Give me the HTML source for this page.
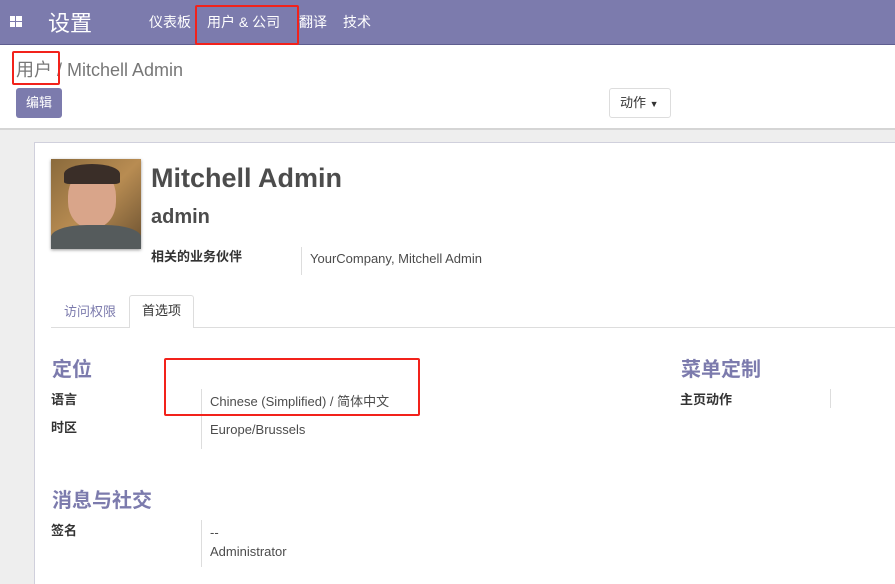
<!DOCTYPE html>
<html><head><meta charset="utf-8"><style>
*{box-sizing:border-box;margin:0;padding:0}
html,body{width:895px;height:584px;overflow:hidden}
body{font-family:"Liberation Sans","Noto Sans CJK SC",sans-serif;font-size:13px;line-height:1.2;color:#4c4c4c;background:#fff;position:relative}
.a{position:absolute;white-space:nowrap}
.nav{left:0;top:0;width:895px;height:45px;background:#7c7bad;border-bottom:1px solid #5e5d8f}
.red{position:absolute;border:2px solid #f2221b;border-radius:2px}
.bg{left:0;top:128px;width:895px;height:456px;background:#eeeeee;border-top:2px solid #d5d5d5}
.sheet{left:34px;top:142px;width:870px;height:450px;background:#fff;border:1px solid #d0d0dc}
.lbl{font-weight:bold;color:#333}
.h{color:#7c7bad;font-weight:bold;font-size:20px}
.vl{position:absolute;width:1px;background:#ddd}
</style></head><body>
<div class="a nav"></div>
<div class="a" style="left:10px;top:16px;width:5px;height:5px;background:#fff"></div>
<div class="a" style="left:16px;top:16px;width:6px;height:5px;background:#fff"></div>
<div class="a" style="left:10px;top:22px;width:5px;height:5px;background:#fff"></div>
<div class="a" style="left:16px;top:22px;width:6px;height:5px;background:#fff"></div>
<div class="a" style="left:48px;top:11px;font-size:22px;color:#fff">设置</div>
<div class="a" style="left:149px;top:14px;font-size:14px;color:#fff">仪表板</div>
<div class="a" style="left:207px;top:14px;font-size:14px;color:#fff">用户 &amp; 公司</div>
<div class="a" style="left:299px;top:14px;font-size:14px;color:#fff">翻译</div>
<div class="a" style="left:343px;top:14px;font-size:14px;color:#fff">技术</div>
<div class="red" style="left:195px;top:5px;width:104px;height:40px"></div>
<div class="a" style="left:16px;top:60px;font-size:18px;color:#777">用户 / Mitchell Admin</div>
<div class="red" style="left:12px;top:51px;width:48px;height:34px"></div>
<div class="a" style="left:16px;top:88px;width:46px;height:30px;background:#7c7bad;border-radius:3px;color:#fff;font-size:13px;line-height:30px;text-align:center">编辑</div>
<div class="a" style="left:609px;top:88px;width:62px;height:30px;border:1px solid #ddd;border-radius:3px;color:#333;line-height:28px;padding-left:10px">动作 <span style="font-size:9px">▼</span></div>
<div class="a bg"></div>
<div class="a sheet"></div>
<div class="a" style="left:51px;top:159px;width:90px;height:90px;overflow:hidden;background:linear-gradient(135deg,#8a6a3c,#b88c52 50%,#6a5030);box-shadow:0 1px 3px rgba(0,0,0,.4)">
<div class="a" style="left:17px;top:11px;width:48px;height:58px;border-radius:45%;background:#d9a58a"></div>
<div class="a" style="left:13px;top:5px;width:56px;height:20px;border-radius:50% 50% 10% 10%;background:#3a2e28"></div>
<div class="a" style="left:0;top:66px;width:90px;height:30px;background:#555b5c;border-radius:40% 40% 0 0"></div>
</div>
<div class="a" style="left:151px;top:162px;font-size:27px;font-weight:bold;color:#4c4c4c">Mitchell Admin</div>
<div class="a" style="left:151px;top:205px;font-size:20px;font-weight:bold;color:#4c4c4c">admin</div>
<div class="a lbl" style="left:151px;top:249px">相关的业务伙伴</div>
<div class="vl" style="left:301px;top:247px;height:28px"></div>
<div class="a" style="left:310px;top:251px;color:#4c4c4c">YourCompany, Mitchell Admin</div>
<div class="a" style="left:51px;top:327px;width:844px;height:1px;background:#ddd"></div>
<div class="a" style="left:64px;top:304px;color:#7c7bad">访问权限</div>
<div class="a" style="left:129px;top:295px;width:65px;height:33px;background:#fff;border:1px solid #ddd;border-bottom:none;border-radius:3px 3px 0 0;text-align:center;line-height:30px;color:#333">首选项</div>
<div class="a h" style="left:52px;top:358px">定位</div>
<div class="a lbl" style="left:51px;top:392px">语言</div>
<div class="a lbl" style="left:51px;top:420px">时区</div>
<div class="vl" style="left:201px;top:389px;height:60px"></div>
<div class="a" style="left:210px;top:394px">Chinese (Simplified) / 简体中文</div>
<div class="a" style="left:210px;top:422px">Europe/Brussels</div>
<div class="red" style="left:164px;top:358px;width:256px;height:58px"></div>
<div class="a h" style="left:681px;top:358px">菜单定制</div>
<div class="a lbl" style="left:680px;top:392px">主页动作</div>
<div class="vl" style="left:830px;top:389px;height:19px"></div>
<div class="a h" style="left:52px;top:489px">消息与社交</div>
<div class="a lbl" style="left:51px;top:523px">签名</div>
<div class="vl" style="left:201px;top:520px;height:47px"></div>
<div class="a" style="left:210px;top:525px">--</div>
<div class="a" style="left:210px;top:544px">Administrator</div>
</body></html>
